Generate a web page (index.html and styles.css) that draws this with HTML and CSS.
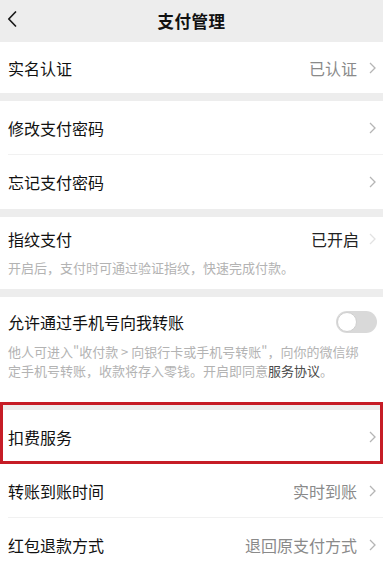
FILE: index.html
```html
<!DOCTYPE html>
<html lang="zh">
<head>
<meta charset="utf-8">
<title>支付管理</title>
<link rel="stylesheet" href="styles.css">
</head>
<body>
<div class="page">
  <header class="topbar">
    <svg class="back" width="10" height="16" viewBox="0 0 10 16"><path d="M8.5 1 L1.8 8 L8.5 15" fill="none" stroke="#1a1a1a" stroke-width="1.7" stroke-linecap="round" stroke-linejoin="round"/></svg>
    <div class="title">支付管理</div>
  </header>

  <section class="group g1">
    <div class="row r51">
      <span class="label">实名认证</span>
      <span class="value">已认证</span>
      <svg class="chev" width="7" height="12" viewBox="0 0 7 12"><path d="M1 1 L6 6 L1 11" fill="none" stroke="#b5b5b5" stroke-width="1.3"/></svg>
    </div>
  </section>

  <section class="group">
    <div class="row r54 sep">
      <span class="label">修改支付密码</span>
      <span class="value"></span>
      <svg class="chev" width="7" height="12" viewBox="0 0 7 12"><path d="M1 1 L6 6 L1 11" fill="none" stroke="#b5b5b5" stroke-width="1.3"/></svg>
    </div>
    <div class="row r54">
      <span class="label">忘记支付密码</span>
      <span class="value"></span>
      <svg class="chev" width="7" height="12" viewBox="0 0 7 12"><path d="M1 1 L6 6 L1 11" fill="none" stroke="#b5b5b5" stroke-width="1.3"/></svg>
    </div>
  </section>

  <section class="group block fp">
    <div class="block-head">
      <span class="label">指纹支付</span>
      <span class="value dark">已开启</span>
      <svg class="chev" width="7" height="12" viewBox="0 0 7 12"><path d="M1 1 L6 6 L1 11" fill="none" stroke="#e2e2e2" stroke-width="1.3"/></svg>
    </div>
    <p class="desc">开启后，支付时可通过验证指纹，快速完成付款。</p>
  </section>

  <section class="group block phone">
    <div class="block-head">
      <span class="label">允许通过手机号向我转账</span>
      <span class="switch"><span class="knob"></span></span>
    </div>
    <p class="desc">他人可进入"收付款 &gt; 向银行卡或手机号转账"，向你的微信绑定手机号转账，收款将存入零钱。开启即同意<b class="link">服务协议</b>。</p>
  </section>

  <section class="group">
    <div class="row r54 marked">
      <span class="label">扣费服务</span>
      <span class="value"></span>
      <svg class="chev" width="7" height="12" viewBox="0 0 7 12"><path d="M1 1 L6 6 L1 11" fill="none" stroke="#b5b5b5" stroke-width="1.3"/></svg>
    </div>
    <div class="row r54 sep">
      <span class="label">转账到账时间</span>
      <span class="value">实时到账</span>
      <svg class="chev" width="7" height="12" viewBox="0 0 7 12"><path d="M1 1 L6 6 L1 11" fill="none" stroke="#b5b5b5" stroke-width="1.3"/></svg>
    </div>
    <div class="row r54">
      <span class="label">红包退款方式</span>
      <span class="value">退回原支付方式</span>
      <svg class="chev" width="7" height="12" viewBox="0 0 7 12"><path d="M1 1 L6 6 L1 11" fill="none" stroke="#b5b5b5" stroke-width="1.3"/></svg>
    </div>
  </section>
</div>
</body>
</html>
```

FILE: styles.css
```css
html, body {
  margin: 0;
  padding: 0;
  background: #ededed;
}
body {
  font-family: "Noto Sans CJK SC", "Noto Sans", sans-serif;
  color: #111;
  width: 383px;
  height: 571px;
  overflow: hidden;
}
.page {
  display: flex;
  flex-direction: column;
  gap: 8px;
}
.topbar {
  position: relative;
  height: 42px;
  display: flex;
  align-items: center;
  justify-content: center;
  margin-bottom: -8px;
}
.back {
  position: absolute;
  left: 7px;
  top: 11px;
}
.title {
  font-size: 16.5px;
  font-weight: 700;
  color: #111;
  letter-spacing: 0.5px;
}
.group {
  background: #fff;
  display: flex;
  flex-direction: column;
}
.row {
  position: relative;
  display: flex;
  align-items: center;
  padding: 0 7px 0 8px;
  box-sizing: border-box;
}
.r51 { height: 51px; }
.r54 { height: 54px; }
.sep::after {
  content: "";
  position: absolute;
  left: 8px;
  right: 0;
  bottom: 0;
  height: 1px;
  background: #f1f1f1;
}
.label {
  font-size: 16px;
  line-height: 22px;
  color: #111;
  flex: 1;
}
.value {
  font-size: 16px;
  line-height: 22px;
  color: #8a8a8a;
  margin-right: 12px;
}
.value.dark {
  color: #222;
  margin-right: 10px;
}
.chev {
  flex: none;
}
.block {
  padding: 11px 7px 12px 8px;
}
.block-head {
  display: flex;
  align-items: center;
  height: 22px;
}
.desc {
  margin: 9px 0 0;
  font-size: 13px;
  line-height: 18px;
  color: #b3b3b3;
}
.phone {
  padding: 14px 6px 22px 8px;
  height: 105px;
  box-sizing: border-box;
}
.phone .desc {
  line-height: 19px;
  margin-top: 9px;
  padding-right: 14px;
}
.link {
  color: #4a4a4a;
  font-weight: 400;
}
.switch {
  position: relative;
  width: 41px;
  height: 22px;
  border-radius: 11px;
  background: #d9d9d9;
  flex: none;
}
.knob {
  position: absolute;
  left: 1px;
  top: 1px;
  width: 18px;
  height: 18px;
  border-radius: 50%;
  background: #fff;
  border: 1px solid #cfcfcf;
}
.marked::before {
  content: "";
  position: absolute;
  left: 0;
  right: 0;
  top: -8px;
  bottom: 0;
  border: 3.5px solid #c61c26;
  pointer-events: none;
}
```
